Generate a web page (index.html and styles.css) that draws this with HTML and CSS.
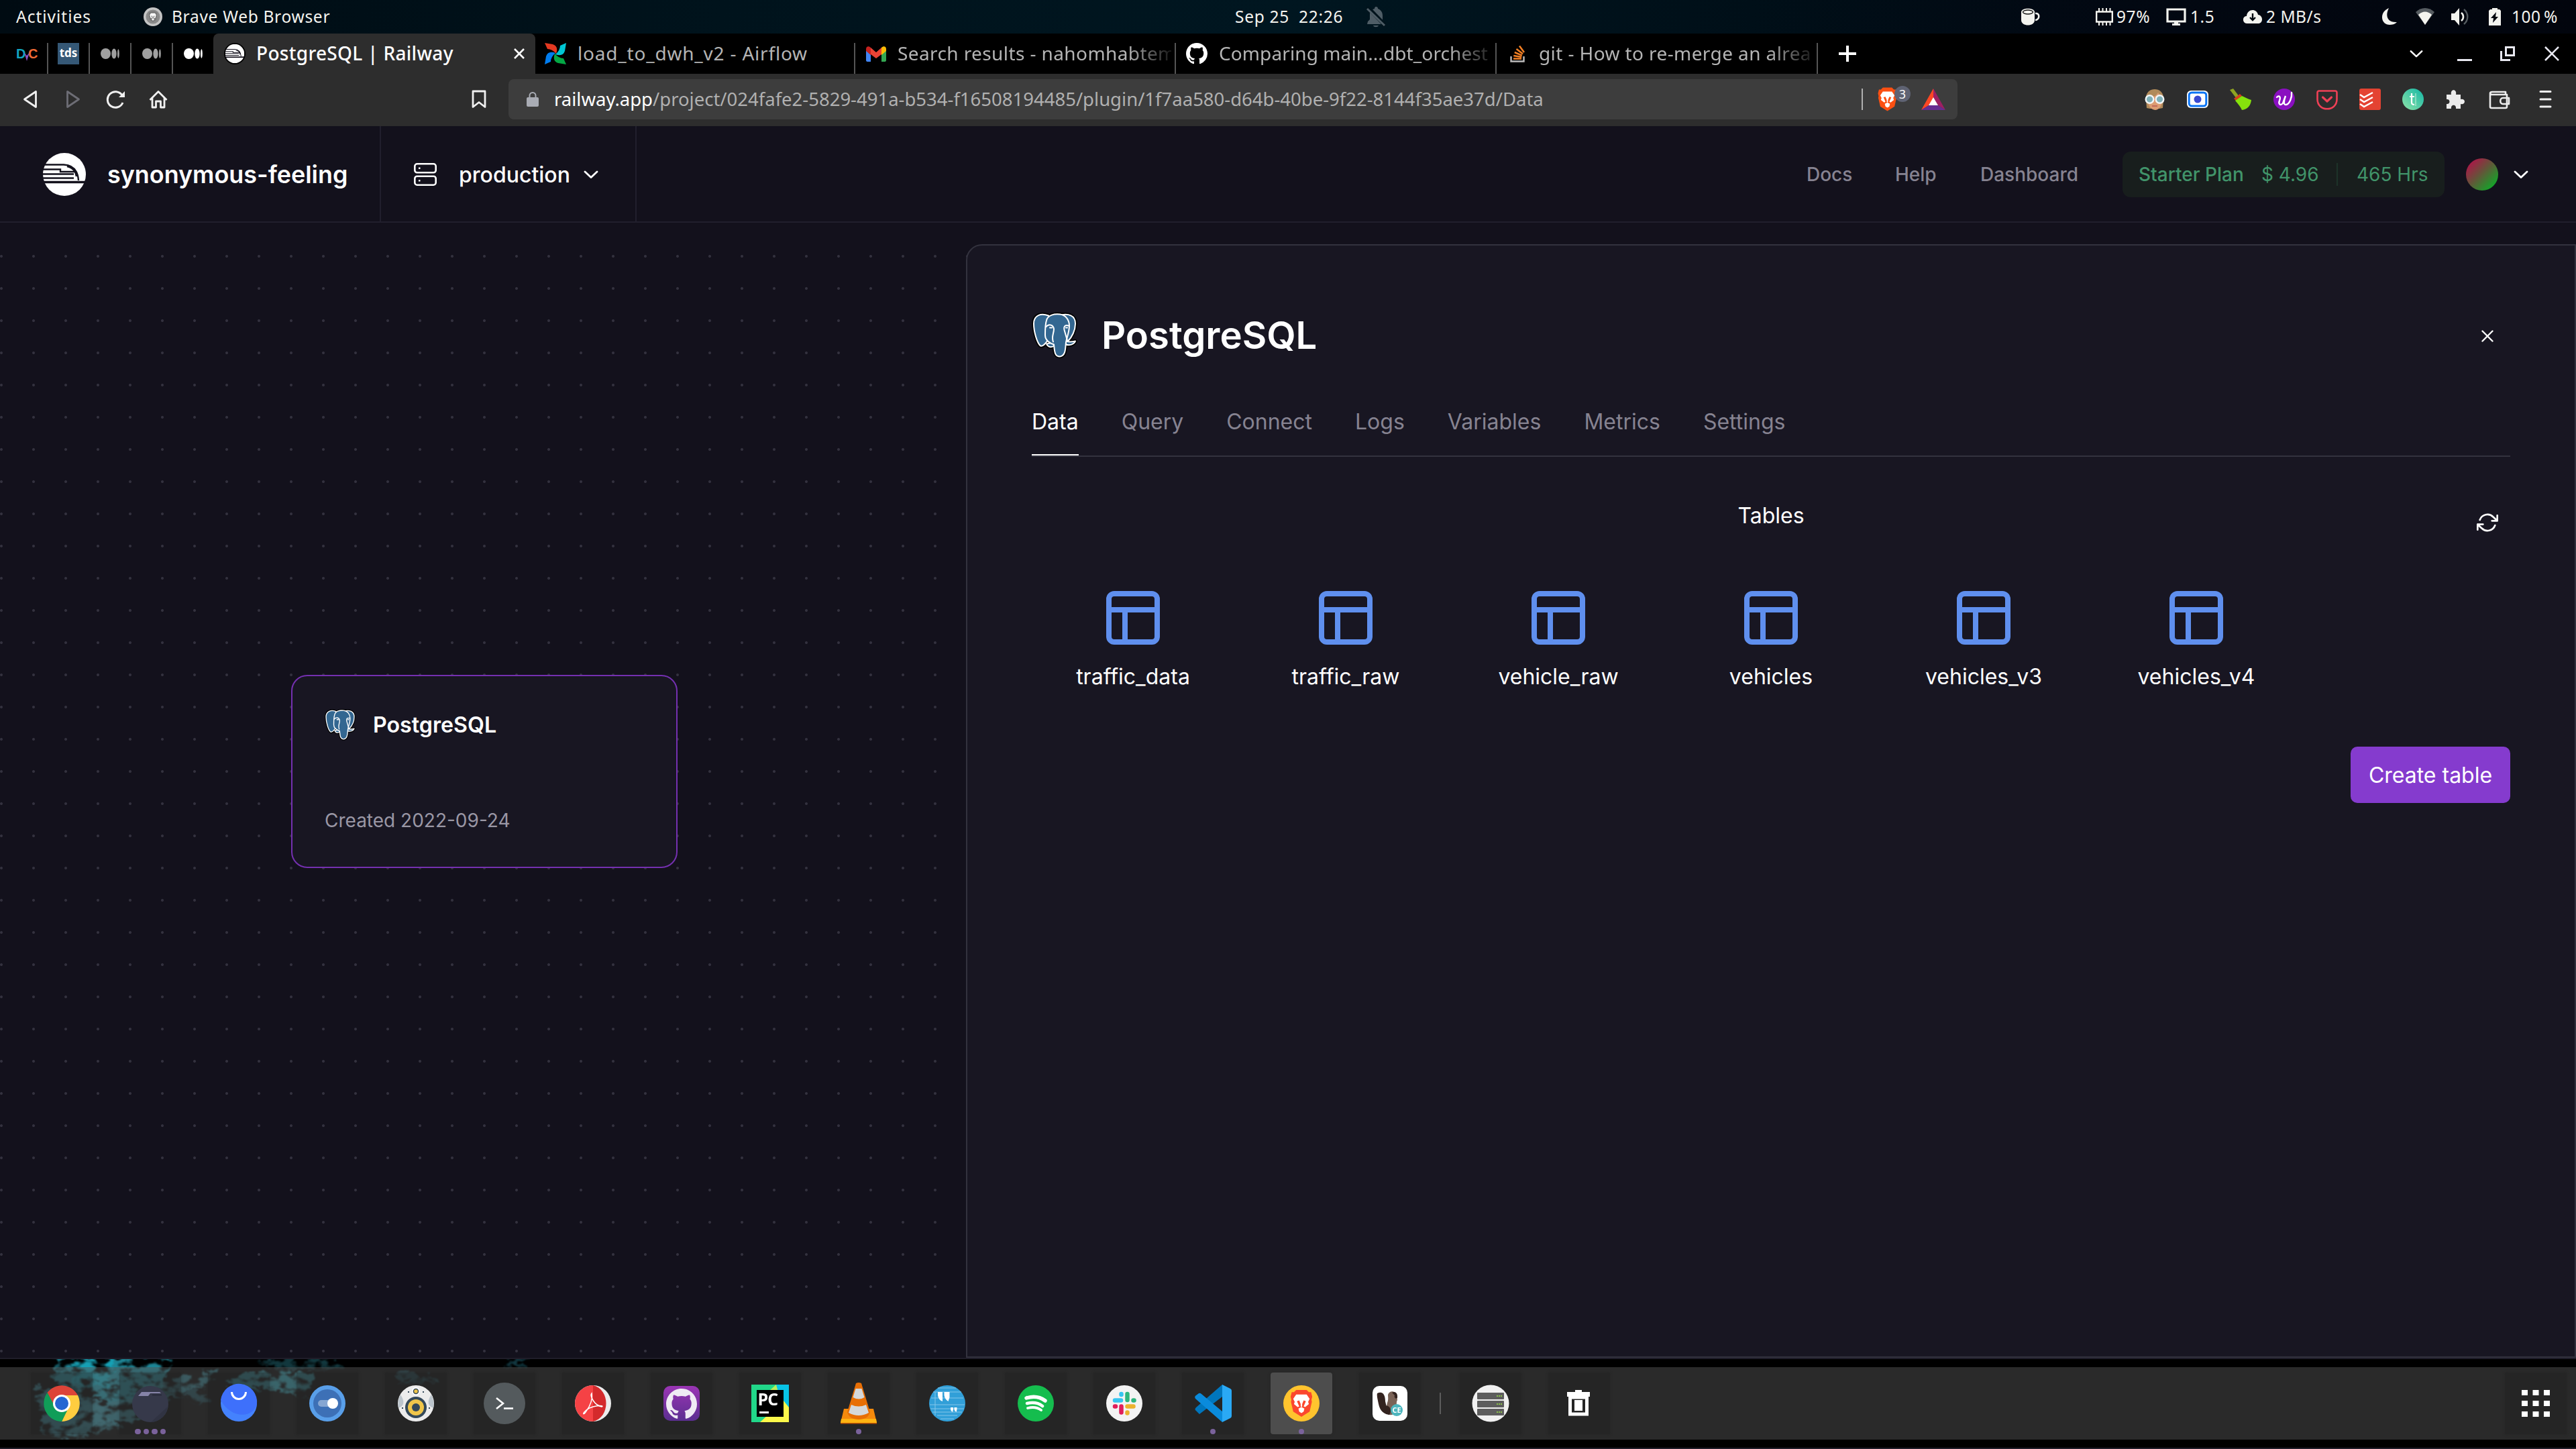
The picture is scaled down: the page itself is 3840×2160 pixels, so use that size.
FILE: index.html
```html
<!DOCTYPE html>
<html lang="en">
<head>
<meta charset="utf-8">
<title>PostgreSQL | Railway</title>
<link rel="stylesheet" href="styles.css">
</head>
<body>
<svg class="sprite" width="0" height="0" aria-hidden="true">
  <symbol id="elephant" viewBox="0 0 68 69">
    <g fill="#000" stroke="#000" stroke-width="5.5" stroke-linejoin="round">
      <path d="M25 5C14 1 3 4 3 17c0 12 5 29 10 33 4 2 8-3 10-7zM44 4c10-2 21 0 21 13 0 10-5 20-11 26l-6-2z"/>
      <path d="M22 12C24 4 34 2 42 3c9 1 14 9 14 17 0 10-4 18-5 25-1 8 0 20-9 21-8 0-8-8-9-18-6-2-13-6-13-14s0-16 2-22z"/>
      <path d="M22 47c5 0 8-2 11-3v6c-4 3-9 2-11-3zM51 43c5 2 10 1 14 0-2 5-9 7-14 5z"/>
    </g>
    <g fill="#336791" stroke="#fff" stroke-width="2" stroke-linejoin="round" stroke-linecap="round">
      <path d="M44 4c10-2 21 0 21 13 0 10-5 20-11 26l-6-2z"/>
      <path d="M25 5C14 1 3 4 3 17c0 12 5 29 10 33 4 2 8-5 11-8z"/>
      <path d="M22 47c5 0 8-2 11-3v6c-4 3-9 2-11-3zM51 43c5 2 10 1 14 0-2 5-9 7-14 5z"/>
      <path d="M22 12C24 4 34 2 42 3c9 1 14 9 14 17 0 10-4 18-5 25-1 8 0 20-9 21-8 0-8-8-9-18-6-2-13-6-13-14s0-16 2-22z"/>
      <path fill="none" d="M21 22c4-5 11-4 12 3 0 7-4 11-1 19M55 20c-6-2-8 2-6 8l4 14M27 23h3M51 23h2"/>
    </g>
  </symbol>
  <symbol id="railway" viewBox="0 0 64 64">
    <circle cx="32" cy="32" r="32" fill="#fff"/>
    <g fill="none" stroke="#13111c" stroke-width="2.4">
      <path d="M2 17.5H31C45 18 52 27 53 41"/>
      <path d="M0 24.500H26V28H50M0 31.500H46M0 37.500H46"/>
      <path d="M36 20C45 22 49 28 50 35"/>
      <path stroke-width="3.600" d="M0 43.500H64"/>
    </g>
  </symbol>
  <symbol id="octocat" viewBox="0 0 16 16"><path fill="currentColor" d="M8 0C3.580 0 0 3.580 0 8c0 3.540 2.290 6.530 5.470 7.590.4.07.55-.17.55-.38 0-.19-.01-.82-.01-1.490-2.010.37-2.530-.49-2.690-.94-.09-.23-.48-.94-.82-1.130-.28-.15-.68-.52-.01-.53.63-.01 1.080.58 1.230.82.72 1.210 1.870.87 2.330.66.07-.52.28-.87.51-1.070-1.780-.2-3.640-.89-3.640-3.950 0-.87.31-1.590.82-2.150-.08-.2-.36-1.020.08-2.120 0 0 .67-.21 2.200.82.64-.18 1.320-.27 2-.27.68 0 1.360.09 2 .27 1.530-1.040 2.200-.82 2.200-.82.44 1.100.16 1.920.08 2.120.51.56.82 1.270.82 2.150 0 3.070-1.870 3.750-3.650 3.950.29.25.54.73.54 1.480 0 1.070-.01 1.930-.01 2.200 0 .21.15.46.55.38A8.013 8.013 0 0016 8c0-4.420-3.580-8-8-8z"/></symbol>
  <symbol id="medium" viewBox="0 0 28 16"><ellipse cx="7.500" cy="8" rx="7.500" ry="8" fill="currentColor"/><ellipse cx="20" cy="8" rx="3.700" ry="7.500" fill="currentColor"/><ellipse cx="26.400" cy="8" rx="1.400" ry="6.800" fill="currentColor"/></symbol>
  <symbol id="lion" viewBox="0 0 30 36">
    <path fill="currentColor" d="M8 0h14l3 3h3l1.500 6-1 4 .5 3-3 13-11 7-11-7-3-13 .5-3-1-4L2 3h3z"/>
    <path fill="#fff" d="M8 6h14l4 6-2 4 1 3-5 4-2-1 3-7-3-1-2 5v3l-1 1-1-1v-3l-2-5-3 1 3 7-2 1-5-4 1-3-2-4zM15 23l4 2-1 4-3 2-3-2-1-4z"/>
  </symbol>
  <symbol id="chev" viewBox="0 0 22 12"><path d="M2 2l9 8.500L20 2" fill="none" stroke="currentColor" stroke-width="2.800" stroke-linecap="round" stroke-linejoin="round"/></symbol>
  <symbol id="table" viewBox="0 0 80 80"><g fill="none" stroke="#5f8fee" stroke-width="8"><rect x="4" y="4" width="72" height="72" rx="8"/><path d="M4 28h72M28 28v48"/></g></symbol>
</svg>

<div class="desktop">
  <div class="topbar">
    <span class="t-act">Activities</span>
    <svg width="28" height="28" viewBox="0 0 28 28"><circle cx="14" cy="14" r="14" fill="#c4c4c4"/><circle cx="14" cy="14" r="10.500" fill="#8a8a8a"/><g color="#777"><use href="#lion" x="7.500" y="5.500" width="13" height="17"/></g></svg>
    <span class="t-app">Brave Web Browser</span>
    <span class="t-date">Sep 25&nbsp; 22:26</span>
    <svg width="30" height="32" viewBox="0 0 30 32"><path fill="#4f5d66" d="M15 1c2 0 3 1 3 3 5 2 7 6 7 10v7l3 4v2H2l1-4 3-3v-8c0-4 3-7 7-8 0-2 1-3 2-3zM11 29h8c-1 3-7 3-8 0z"/><path d="M1 0l28 29" stroke="#00131c" stroke-width="6"/><path d="M2 4l26 25" stroke="#4f5d66" stroke-width="3"/></svg>
    <svg width="30" height="26" viewBox="0 0 30 26"><path fill="#f4f4ef" d="M1 6c0-7 20-7 20 0v12c0 10-20 10-20 0z"/><ellipse cx="11" cy="6" rx="7.500" ry="3" fill="none" stroke="#111" stroke-width="1.400"/><path d="M22 8c7-1 7 9 0 10" fill="none" stroke="#f4f4ef" stroke-width="2.600"/></svg>
    <svg width="26" height="26" viewBox="0 0 26 26"><path d="M1.200 5.500h23.600v15H1.200z" fill="none" stroke="#f4f4ef" stroke-width="2.400"/><path d="M5 0v5M10.500 0v5M16 0v5M21.500 0v5M5 21v5M10.500 21v5M16 21v5M21.500 21v5" stroke="#f4f4ef" stroke-width="2"/></svg>
    <span class="t-stat">97%</span>
    <svg width="30" height="26" viewBox="0 0 30 26"><path d="M2 2h26v18H2z" fill="none" stroke="#f4f4ef" stroke-width="3.200"/><path fill="#f4f4ef" d="M12 20h6v3h3v3H9v-3h3z"/></svg>
    <span class="t-stat">1.5</span>
    <svg width="28" height="20" viewBox="0 0 28 20"><path fill="#f4f4ef" d="M6 20c-8 0-8-11-1-11C6-2 20-3 22 7c8 1 8 13 0 13z"/><path d="M14 5v9M10 11l4 4 4-4" fill="none" stroke="#02080f" stroke-width="2.400"/></svg>
    <span class="t-net">2 MB/s</span>
    <svg width="22" height="26" viewBox="0 0 22 26"><path fill="#f4f4ef" d="M10 0C-4 6-3 24 11 25c4 0 8-1 11-4C8 22 4 12 10 0z"/></svg>
    <svg width="28" height="26" viewBox="0 0 28 26"><path fill="#555b60" d="M0 6c8-8 20-8 28 0L14 25z"/><path fill="#f4f4ef" d="M4 10c6-6 14-6 20 0L14 25z"/></svg>
    <svg width="26" height="26" viewBox="0 0 26 26"><path fill="#f4f4ef" d="M0 8h5l7-8v26l-7-8H0z"/><path d="M15 7c4 3 4 9 0 12" fill="none" stroke="#f4f4ef" stroke-width="2.600"/><path d="M19 2c7 6 7 16 0 22" fill="none" stroke="#555b60" stroke-width="2.400"/></svg>
    <svg width="18" height="26" viewBox="0 0 18 26"><path fill="#f4f4ef" d="M5 0h8v2h3l2 2v22H0V4l2-2h3z"/><path fill="#02060e" d="M11 6l-8 9h4l-1 7 8-9h-4z"/></svg>
    <span class="t-bat">100&#8201;%</span>
  </div>

  <div class="tabstrip">
    <div class="pin"><svg width="32" height="32" viewBox="0 0 32 32"><g class="dvc"><text x="0" y="23" fill="#12a5bf">D</text><text x="18" y="23" fill="#ef6b36">C</text></g><path fill="#8a4fc4" d="M12 14l4 13 4-13-4 5z"/></svg></div>
    <div class="pin"><svg width="32" height="32" viewBox="0 0 32 32"><path fill="#355876" d="M0 0h32v32H0z"/><text class="tds" x="16" y="21" text-anchor="middle" fill="#fff">tds</text></svg></div>
    <div class="pin dim"><svg width="28" height="16"><use href="#medium"/></svg></div>
    <div class="pin dim"><svg width="28" height="16"><use href="#medium"/></svg></div>
    <div class="pin last"><svg width="28" height="16"><use href="#medium"/></svg></div>
    <div class="tab active"><svg width="32" height="32" viewBox="-4 -4 72 72"><circle cx="32" cy="32" r="36"/><use href="#railway" width="64" height="64"/></svg><span class="label">PostgreSQL | Railway</span><svg class="x" width="16" height="16" viewBox="0 0 16 16"><path d="M1 1l14 14M15 1L1 15" stroke="#fff" stroke-width="2.600"/></svg></div>
    <div class="tab air"><svg width="32" height="32" viewBox="0 0 32 32"><path fill="#e43921" d="M0 0l12 2q9 3 5 14-6-7-13-7z"/><path fill="#00c7d4" d="M32 0l-2 12q-3 9-14 5 7-6 7-13z"/><path fill="#04a845" d="M32 32l-12-2q-9-3-5-14 6 7 13 7z"/><path fill="#017cee" d="M0 32l2-12q3-9 14-5-7 6-7 13z"/></svg><span class="label">load_to_dwh_v2 - Airflow</span></div>
    <div class="tab gm"><svg width="30" height="23" viewBox="0 0 30 23"><path fill="#4285f4" d="M0 6l7 5v12H2c-1 0-2-1-2-2z"/><path fill="#34a853" d="M30 6l-7 5v12h5c1 0 2-1 2-2z"/><path fill="#fbbc04" d="M23 2c3-3 7-2 7 2v3l-7 6z"/><path fill="#c5221f" d="M7 2C4-1 0 0 0 4v3l7 6z"/><path fill="#ea4335" d="M7 2l8 7 8-7v10l-8 6-8-6z"/></svg><span class="label fade">Search results - nahomhabtem</span></div>
    <div class="tab gh"><svg width="32" height="32"><use href="#octocat"/></svg><span class="label fade">Comparing main...dbt_orchest</span></div>
    <div class="tab so"><svg width="24" height="26" viewBox="0 0 24 26"><path d="M1.500 17v7.500h19V17" fill="none" stroke="#bcbbbb" stroke-width="2.400"/><path d="M5 20.500h12M5.300 16l12 2M6.800 11l11 4.600M9.500 6l9.500 7.300M14 1.500l7 9.500" stroke="#f48024" stroke-width="2.500"/></svg><span class="label fade">git - How to re-merge an alrea</span></div>
    <svg class="plus" width="26" height="24" viewBox="0 0 26 24"><path d="M13 0v24M0 12h26" stroke="#fff" stroke-width="4"/></svg>
    <div class="winctl">
      <svg width="20" height="12"><use href="#chev"/></svg>
      <svg width="22" height="24" viewBox="0 0 22 24"><path d="M0 21.500h22" stroke="#e8e8f0" stroke-width="3"/></svg>
      <svg width="22" height="22" viewBox="0 0 22 22"><path d="M8.500 1.500h12v12h-12zM1.500 7v13.500H15" fill="none" stroke="#e8e8f0" stroke-width="3"/></svg>
      <svg width="22" height="22" viewBox="0 0 22 22"><path d="M1 1l20 20M21 1L1 21" stroke="#e8e8f0" stroke-width="2.600"/></svg>
    </div>
  </div>

  <div class="toolbar">
    <div class="nav">
      <svg width="22" height="28" viewBox="0 0 22 28"><path d="M19.500 2.500v23L2.500 14z" fill="none" stroke="#f0f0f0" stroke-width="2.800" stroke-linejoin="round"/></svg>
      <svg width="22" height="28" viewBox="0 0 22 28"><path d="M2.500 2.500v23l17-11.500z" fill="none" stroke="#6d6d75" stroke-width="2.800" stroke-linejoin="round"/></svg>
      <svg width="28" height="28" viewBox="0 0 28 28"><path d="M25 19a11.800 11.800 0 1 1-1-11" fill="none" stroke="#f0f0f0" stroke-width="3"/><path fill="#f0f0f0" d="M28 2v9h-9z"/></svg>
      <svg width="28" height="28" viewBox="0 0 28 28"><path d="M1.500 15L14 2.500 26.500 15M5 12v14h5.500v-9h7v9H23V12" fill="none" stroke="#f0f0f0" stroke-width="2.800" stroke-linejoin="round"/></svg>
    </div>
    <svg class="bookmark" width="22" height="28" viewBox="0 0 22 28"><path d="M2 2h18v23.500l-9-7-9 7z" fill="none" stroke="#f0f0f0" stroke-width="2.800" stroke-linejoin="round"/></svg>
    <div class="url">
      <svg width="18" height="22" viewBox="0 0 18 22"><rect y="8" width="18" height="14" rx="2" fill="#a9acb4"/><path d="M4.500 9V5.500a4.500 4.500 0 0 1 9 0V9" fill="none" stroke="#a9acb4" stroke-width="2"/></svg>
      <span class="addr"><b>railway.app</b><span class="path">/project/024fafe2-5829-491a-b534-f16508194485/plugin/1f7aa580-d64b-40be-9f22-8144f35ae37d/Data</span></span>
      <i class="vsep"></i>
      <span class="shield"><svg width="29" height="36" color="#fb5012"><use href="#lion"/></svg><em>3</em></span>
      <svg class="bat" width="36" height="32" viewBox="0 0 36 32"><path fill="#ff4724" d="M18 0v14l-7 11L0 32z"/><path fill="#9e1f63" d="M18 0v14l7 11 11 7z"/><path fill="#662d91" d="M11 25h14l11 7H0z"/><path fill="#fff" d="M18 13l7 12H11z"/></svg>
    </div>
    <div class="exts">
      <svg viewBox="0 0 32 32"><path fill="#b08a5a" d="M3 16C1-4 31-4 29 16l-1 13-5 1H9l-5-1z"/><path fill="#dc9c72" d="M5 15c8-1 13-4 16-9l6 9c1 22-21 23-22 0z"/><path d="M12 26h8" stroke="#c46a5a" stroke-width="2"/><g fill="#7fb0b8" stroke="#f2f6f7" stroke-width="2.400"><circle cx="8.500" cy="16" r="5.800"/><circle cx="23.500" cy="16" r="5.800"/></g></svg>
      <svg viewBox="0 0 32 32"><rect y="3" width="32" height="26" rx="6" fill="#fff"/><rect x="3.200" y="6" width="25.600" height="20" rx="4" fill="#fff" stroke="#0a74f5" stroke-width="3"/><circle cx="16" cy="16" r="5.500" fill="#3949d0"/></svg>
      <svg viewBox="0 0 32 32"><path fill="#8fa322" d="M0 2l5-2 9 12-4 3z"/><path fill="#d43f1d" d="M6 15l9-7 3 3-9 7z"/><path fill="#86e20c" d="M8 18l10-7c5 2 10 5 14 6-1 9-6 14-14 15-2-5-6-9-10-14z"/></svg>
      <svg viewBox="0 0 32 32"><circle cx="16" cy="16" r="16" fill="#8a0fc0"/><path d="M5 13c4-4 6 0 4 5s1 8 5 4l4-11c-3 8-3 14 1 13 5-1 9-11 8-18" fill="none" stroke="#fff" stroke-width="2.400" stroke-linecap="round"/></svg>
      <svg viewBox="0 0 32 32"><path d="M4 3.500h24c1.500 0 2.500 1 2.500 2.500v10c0 19-29 19-29 0V6c0-1.500 1-2.500 2.500-2.500z" fill="none" stroke="#ef4056" stroke-width="2.600"/><path d="M9.500 13l6.500 6 6.500-6" fill="none" stroke="#ef4056" stroke-width="3.200" stroke-linecap="round" stroke-linejoin="round"/></svg>
      <svg viewBox="0 0 32 32"><rect width="32" height="32" rx="3" fill="#e44332"/><path d="M1 9l6 4L20 6M1 16l6 4 13-7M1 23l6 4 13-7" fill="none" stroke="#fff" stroke-width="2.400"/></svg>
      <svg viewBox="0 0 32 32"><defs><linearGradient id="tg" x1="1" y1="0" x2="0" y2="1"><stop offset="0" stop-color="#12b6a5"/><stop offset="1" stop-color="#8fe3a8"/></linearGradient></defs><circle cx="16" cy="16" r="16" fill="url(#tg)"/><path d="M14 7v14q0 3 4 3M11 12h7" fill="none" stroke="#fff" stroke-width="2.200"/><path d="M20 7v19" stroke="#c9f2dc" stroke-width="1"/></svg>
      <svg viewBox="0 0 32 32"><path fill="#ececec" d="M2 9h7c-2-9 9-9 7 0h7v7c8-2 8 9 0 7v7h-7c1-7-8-7-7 0H2v-7c6 1 6-8 0-7z"/></svg>
      <svg viewBox="0 0 32 32"><path d="M25 9V5H5C1 5 1 9 5 9h22v18q0 2-2 2H4q-2 0-2-2V7M30 14H21c-5 0-5 9 0 9h9z" fill="none" stroke="#ececec" stroke-width="2.600" stroke-linejoin="round"/></svg>
      <svg viewBox="0 0 32 32"><path d="M13 4.500h15M13 16h15M13 27h15" stroke="#f0f0f0" stroke-width="3" stroke-linecap="round"/></svg>
    </div>
  </div>

  <header class="apphead">
    <div class="brand"><svg width="64" height="64"><use href="#railway"/></svg><span>synonymous-feeling</span></div>
    <div class="env">
      <svg width="34" height="34" viewBox="0 0 34 34"><g fill="none" stroke="#fff" stroke-width="2.600"><rect x="1.300" y="1.300" width="31.400" height="13" rx="3.500"/><rect x="1.300" y="19.700" width="31.400" height="13" rx="3.500"/></g><path d="M7 7.800h2.500M7 26.200h2.500" stroke="#fff" stroke-width="2.600"/></svg>
      <span>production</span>
      <svg width="22" height="12"><use href="#chev"/></svg>
    </div>
    <nav class="links"><a>Docs</a><a>Help</a><a>Dashboard</a></nav>
    <div class="plan"><span class="p1">Starter Plan</span><span class="p2">$ 4.96</span><span class="p3">465 Hrs</span></div>
    <div class="avatar"></div>
    <svg class="achev" width="22" height="12"><use href="#chev"/></svg>
  </header>

  <main class="canvas">
    <section class="node">
      <div class="node-head"><svg width="46" height="47"><use href="#elephant"/></svg><span>PostgreSQL</span></div>
      <div class="node-foot">Created 2022-09-24</div>
    </section>
    <section class="panel">
      <div class="title"><svg width="68" height="70"><use href="#elephant"/></svg><h1>PostgreSQL</h1><svg class="close" width="18" height="18" viewBox="0 0 18 18"><path d="M1.500 1.500l15 15M16.500 1.500l-15 15" stroke="#fff" stroke-width="2.400" stroke-linecap="round"/></svg></div>
      <nav class="tabs"><a class="on">Data</a><a>Query</a><a>Connect</a><a>Logs</a><a>Variables</a><a>Metrics</a><a>Settings</a></nav>
      <div class="subhead"><h2>Tables</h2><svg width="32" height="32" viewBox="0 0 24 24"><path d="M23 4v6h-6M1 20v-6h6M3.510 9a9 9 0 0 1 14.850-3.360L23 10M1 14l4.640 4.360A9 9 0 0 0 20.490 15" fill="none" stroke="#fff" stroke-width="2" stroke-linecap="round" stroke-linejoin="round"/></svg></div>
      <div class="tables">
        <div><svg width="80" height="80"><use href="#table"/></svg><span>traffic_data</span></div>
        <div><svg width="80" height="80"><use href="#table"/></svg><span>traffic_raw</span></div>
        <div><svg width="80" height="80"><use href="#table"/></svg><span>vehicle_raw</span></div>
        <div><svg width="80" height="80"><use href="#table"/></svg><span>vehicles</span></div>
        <div><svg width="80" height="80"><use href="#table"/></svg><span>vehicles_v3</span></div>
        <div><svg width="80" height="80"><use href="#table"/></svg><span>vehicles_v4</span></div>
      </div>
      <button class="create">Create table</button>
    </section>
  </main>

  <footer class="dockwrap">
    <svg class="wall" width="900" height="120" viewBox="0 0 900 120">
      <defs>
        <filter id="rough" x="-10%" y="-30%" width="120%" height="160%">
          <feTurbulence type="fractalNoise" baseFrequency="0.05 0.09" numOctaves="4" seed="8" result="n"/>
          <feDisplacementMap in="SourceGraphic" in2="n" scale="34" xChannelSelector="R" yChannelSelector="G" result="d"/>
          <feColorMatrix in="n" type="matrix" values="0 0 0 0 0  0 0 0 0 0  0 0 0 0 0  0 5 0 0 -1.700" result="m"/>
          <feComposite in="d" in2="m" operator="in"/>
          <feGaussianBlur stdDeviation="1.200"/>
        </filter>
      </defs>
      <g filter="url(#rough)">
        <path fill="#1b8494" d="M80 0h175l-20 55-60 20-40-20-50-5z"/>
        <path fill="#16a0b4" d="M110 0h60l-10 45-50-5z"/>
        <path fill="#2f8192" opacity=".9" d="M55 40l80 15 30 40-70 24-30-10z"/>
        <path fill="#2f7d8c" opacity=".9" d="M105 80l100-20 10 30-125 34z"/>
        <path fill="#2b7f8e" opacity=".75" d="M190 45l130-25-10 20-70 24z"/>
        <path fill="#278896" opacity=".85" d="M335 30l60-15 70 10-10 32-60-10-50 5z"/>
        <path fill="#1d6d7a" opacity=".5" d="M380 0h120l10 14-90 5z"/>
        <path fill="#236b7b" opacity=".5" d="M590 20h50l10 16h-60zM750 0h40l-6 12h-30zM280 50h34l-5 20-22-5z"/>
      </g>
    </svg>
    <div class="dock">
      <div class="tile"><svg viewBox="0 0 54 54"><path fill="#dd4438" d="M5.500 11A27 27 0 0 1 51 15H27L15 30z"/><path fill="#ffcd40" d="M51 15A27 27 0 0 1 27 54l12-27-8-12z"/><path fill="#109d58" d="M5.500 11A27 27 0 0 0 27 54l8-16-18-6z"/><circle cx="27" cy="27" r="13" fill="#fff"/><circle cx="27" cy="27" r="10" fill="#2565d2"/></svg></div>
      <div class="tile"><svg viewBox="0 0 54 54"><circle cx="27" cy="28" r="27" fill="#36394a"/><path fill="#8684a8" d="M14 10h27l2 2H27l-3 4H9z"/><path d="M30 14.500h14" stroke="#262938" stroke-width="1.500"/><path fill="#303342" d="M53 32A27 27 0 0 1 28 55z"/></svg><span class="dots"><i></i><i></i><i></i><i></i></span></div>
      <div class="tile"><svg viewBox="0 0 54 54"><circle cx="27" cy="27" r="27" fill="#4482fd"/><path fill="#3e70fb" d="M0 22A27 27 0 0 1 54 28C50 48 16 52 0 22z"/><path d="M16.500 10a10.500 10.500 0 0 0 21 0" fill="none" stroke="#fff" stroke-width="3"/></svg></div>
      <div class="tile"><svg viewBox="0 0 54 54"><circle cx="27" cy="27" r="27" fill="#599fe9"/><circle cx="27" cy="27" r="21" fill="#3d70b6"/><rect x="13" y="22" width="25" height="10" rx="5" fill="#86a6d2"/><circle cx="35" cy="27" r="8" fill="#fff"/></svg></div>
      <div class="tile"><svg viewBox="0 0 54 54"><circle cx="27" cy="27" r="27" fill="#ececec"/><path fill="#bcc5cc" d="M4 14q10 15-3 20-2-10 3-20zM50 14q-10 15 3 20 2-10-3-20z"/><circle cx="27" cy="33" r="16" fill="#34495a"/><circle cx="27" cy="33" r="12" fill="#f0c64a"/><circle cx="27" cy="33" r="6" fill="#34495a"/><circle cx="27" cy="9" r="6" fill="#fff"/><circle cx="27" cy="9" r="3.500" fill="#f0c64a" stroke="#34495a" stroke-width="1.500"/><path d="M15 10h2M37 10h2M6 34h2M46 34h2" stroke="#34495a" stroke-width="2"/></svg></div>
      <div class="tile"><svg class="big" viewBox="0 0 62 62"><circle cx="31" cy="31" r="31" fill="#545a5d"/><path d="M19 23l10 8-10 8" fill="none" stroke="#fff" stroke-width="2.600"/><path d="M30 38.500h14" stroke="#fff" stroke-width="2.600"/></svg></div>
      <div class="tile"><svg viewBox="0 0 54 54"><circle cx="27" cy="27" r="27" fill="#ececec"/><path fill="#f54245" d="M27 0a27 27 0 0 0 0 54z"/><path fill="#d42a2c" d="M27 0c26 6 26 48 0 54z"/><path d="M25 12c-3 4 4 18 15 20 6-2-16-4-26 8-3 4 0 3 2 0 6-8 11-18 9-28z" fill="none" stroke="#fff" stroke-width="1.500"/></svg></div>
      <div class="tile"><svg viewBox="0 0 54 54"><defs><linearGradient id="pg" x2="0" y2="1"><stop stop-color="#9a35b4"/><stop offset="1" stop-color="#5b2e91"/></linearGradient></defs><rect y="1" width="54" height="52" rx="10" fill="url(#pg)"/><g color="#efeaf4"><use href="#octocat" x="4" y="5" width="46" height="46"/></g></svg></div>
      <div class="tile"><svg viewBox="0 0 54 54"><path fill="#21d789" d="M-1-1h56v56H-1z"/><path fill="#07c3e6" d="M36-1h19v34L40 15z"/><path fill="#fcf84a" d="M12 55l35-32 8 10v22z"/><path fill="#b9ee5c" d="M26 8l10-9 5 18z"/><path d="M7 7h40v40H7z"/><text class="pc" x="8.500" y="30" fill="#fff">PC</text><path fill="#fff" d="M11 39h14v3H11z"/></svg></div>
      <div class="tile"><svg class="big" viewBox="0 0 62 62"><path fill="#f58a0c" d="M9 39h44l5 21H4z"/><path fill="#ffb412" d="M5 54h52l1 6H4z"/><path fill="#e86f05" d="M14 44l13-43q4-2 8 0l13 43q-3 11-17 11t-17-11z"/><path fill="#d5d8da" d="M26.500 9h9l4 13q-8 5-17 0zM20 33q11 5 22 0l4 12q-15 8-30 0z"/><path fill="#c05402" d="M4 60h54v1.500H4z"/></svg><span class="dots"><i></i></span></div>
      <div class="tile"><svg viewBox="0 0 54 54"><circle cx="27" cy="27" r="27" fill="#319fd8"/><path d="M13 4h27M6 10h42M3 19h48M1 29h52M2 35h50M5 40h44M12 45h30M17 50h20M9 10v35" stroke="#84c6ea" stroke-width="1"/><path fill="#fff" d="M13 10h7v14q-6-2-7-9zM22.500 10h8v8l-2 6q-5-3-6-9zM32 33h4v3l-1 4q-3-2-3-4zM37.500 33h4v3l-1 4q-3-2-3-4z"/></svg></div>
      <div class="tile"><svg viewBox="0 0 54 54"><circle cx="27" cy="27" r="27" fill="#15bd4e"/><g fill="none" stroke="#fff" stroke-linecap="round"><path stroke-width="5.500" d="M13 19q16-5 28 4"/><path stroke-width="4.500" d="M14 27q14-3 23 4"/><path stroke-width="3.800" d="M15 34q12-3 20 3"/></g></svg></div>
      <div class="tile"><svg viewBox="0 0 54 54"><circle cx="27" cy="27" r="27" fill="#f3f3f3"/><g stroke-width="6.500" stroke-linecap="round"><path stroke="#36c5f0" d="M13 22.500h9M22.500 13v1"/><path stroke="#2eb67d" d="M31.500 13v9M40.500 22.500h1"/><path stroke="#ecb22e" d="M31.500 31.500h9M31.500 40.500v1"/><path stroke="#e01e5a" d="M22.500 31.500v9M13 31.500h1"/></g></svg></div>
      <div class="tile"><svg viewBox="0 0 54 54"><path fill="#0076bd" d="M41-1v18L7 43l-5-5q-3-2 0-5z"/><path fill="#0a8bdc" d="M2 15l4-3q2-1 4 1l31 26v16L1 20q-2-3 1-5z"/><path fill="#2aa9f5" d="M41-1l12 6q2 1 2 3v38q0 2-2 3l-12 6z"/></svg><span class="dots"><i></i></span></div>
      <div class="tile cur"><svg viewBox="0 0 54 54"><circle cx="27" cy="27" r="27" fill="#ffc42e"/><g color="#fb472e"><use href="#lion" x="9" y="7" width="36" height="40"/></g></svg><span class="dots"><i></i></span></div>
      <div class="tile"><svg viewBox="0 0 54 54"><rect x="1" y="1" width="52" height="52" rx="10" fill="#fff"/><path fill="#33231f" d="M8 12c8-4 12 2 12 12 1 6 4 14 8 20-10 0-16-6-18-16-1-6-3-12-2-16z"/><path fill="#7a6256" d="M24 14c2-7 12-6 13 1l1 7c-2 3-1 9 0 13-1 6-6 10-12 9 2-6-6-10-3-18 2-5 1-8 1-12z"/><path fill="#33231f" d="M30 11c5-3 9 1 8 8-3 2-5-1-4-4zM22 30c6 2 8 8 4 14-6-2-8-8-4-14z"/><circle cx="37" cy="37" r="9" fill="#4db5bd"/><text class="ce" x="37" y="41" text-anchor="middle" fill="#fff">CE</text></svg></div>
      <i class="dsep"></i>
      <div class="tile"><svg viewBox="0 0 54 54"><circle cx="27" cy="27" r="27.500" fill="#f1f1f1"/><g fill="#5d5d5d"><rect x="7" y="11" width="40" height="10" rx="1"/><rect x="7" y="23" width="40" height="10" rx="1"/><rect x="7" y="35" width="40" height="10" rx="1"/></g><path d="M36 16h8M36 28h8M36 40h8" stroke="#8bc34a" stroke-width="2" stroke-dasharray="2 1"/></svg></div>
      <div class="tile"><svg viewBox="1 0 54 54"><path fill="#fff" d="M22 7h10v3h12v7H10v-7h12z"/><path d="M14.500 18h25v25h-25z" fill="none" stroke="#fff" stroke-width="5"/><path fill="#fff" d="M21 22h12v16H21z"/></svg></div>
      <div class="tile apps"><svg viewBox="0 0 54 54"><g fill="#fff"><path d="M6 7h9v8H6zM22.500 7h9v8h-9zM39 7h9v8h-9zM6 23h9v8H6zM22.500 23h9v8h-9zM39 23h9v8h-9zM6 39h9v8H6zM22.500 39h9v8h-9zM39 39h9v8h-9z"/></g></svg></div>
    </div>
  </footer>
</div>
</body>
</html>
```
FILE: styles.css
```css
* { box-sizing: border-box; }
body { margin: 0; background: #000; }
.sprite { display: block; position: absolute; }
svg { display: block; flex: none; }
.desktop {
  width: 3840px; height: 2160px; overflow: hidden;
  display: flex; flex-direction: column;
  font-family: "Noto Sans", sans-serif; color: #fff;
}
.desktop span { white-space: nowrap; }

/* system bar */
.topbar {
  height: 50px; flex: none; display: grid; align-items: center;
  grid-template-columns: 190px 42px 1585px 195px 976px 112px 31px 74px 36px 79px 34px 173px 50px 53px 56px 34px 96px;
  padding-left: 24px;
  background: linear-gradient(90deg, #000b12 0, #00131c 28%, #001620 50%, #000f18 68%, #020812 82%, #02050d 100%);
  font-size: 24.500px; letter-spacing: .7px; color: #f4f4ef;
}
.topbar span { margin-top: -2px; }
.topbar .t-act { letter-spacing: 1px; }
.topbar .t-stat { letter-spacing: .6px; }
.topbar .t-net, .topbar .t-bat { letter-spacing: .5px; }

/* browser tabs */
.tabstrip { height: 60px; flex: none; display: flex; align-items: flex-start; background: #000; font-size: 28px; letter-spacing: .8px; }
.pin { width: 62px; height: 46px; margin-top: 14px; padding: 0 15px; border-right: 2px solid #555; display: flex; align-items: center; justify-content: center; }
.pin svg { margin-bottom: 14px; overflow: visible; letter-spacing: 0; }
.pin:first-child { width: 72px; padding: 0 15px 0 24px; }
.pin.dim { color: #a0a0a0; }
.pin.last { width: 60px; border: 0; }
.dvc { font: bold 20px "Liberation Sans", sans-serif; }
.tds { font: bold 17px "Noto Sans", sans-serif; }
.tab { height: 60px; display: flex; align-items: center; color: #b4b4b4; }
.tab .label { margin-top: -2px; line-height: 44px; }
.tab.active { width: 480px; padding: 0 16px; background: #2d2d2d; border-radius: 8px 8px 0 0; color: #fff; font-weight: 500; letter-spacing: .3px; }
.tab.active .label { margin-left: 16px; width: 384px; }
.air { width: 477px; padding-left: 14px; }
.gm { width: 478px; padding-left: 16px; letter-spacing: .4px; }
.gh { width: 478px; padding-left: 15px; letter-spacing: .1px; }
.gh svg { color: #fff; }
.so { width: 479px; padding-left: 20px; letter-spacing: .4px; }
.air .label, .gm .label, .gh .label, .so .label { margin-left: 17px; }
.gm .label, .gh .label, .so .label { width: 408px; }
.so .label { margin-left: 19px; }
.air, .gm, .gh, .so { background: linear-gradient(#555, #555) right bottom / 2px 46px no-repeat; }
.fade { -webkit-mask-image: linear-gradient(90deg, #000 84%, rgba(0, 0, 0, .12) 100%); mask-image: linear-gradient(90deg, #000 84%, rgba(0, 0, 0, .12) 100%); }
.plus { margin: 18px 0 0 31px; }
.winctl { margin: 18px 25px 0 auto; display: grid; grid-template-columns: 71px 64px 66px 22px; align-items: center; color: #fff; }

/* browser toolbar */
.toolbar { height: 78px; flex: none; display: flex; align-items: center; padding-bottom: 2px; background: #2d2d2d; }
.nav { display: grid; grid-template-columns: 64px 60px 64px 28px; margin-left: 34px; }
.bookmark { margin-left: 453px; }
.url { width: 2160px; height: 60px; margin-left: 33px; border-radius: 8px; background: #3d3d3d; display: flex; align-items: center; padding-left: 27px; font-size: 27.500px; }
.addr { width: 1949px; margin: -2px 0 0 23px; display: flex; color: #b0b0b0; }
.addr b { font-weight: 400; color: #fff; }
.vsep { width: 2px; height: 32px; margin-right: 22px; background: #b0b0b0; }
.shield { display: flex; position: relative; }
.shield em { position: absolute; left: 25px; top: -2px; width: 24px; height: 24px; border-radius: 12px; background: #5f6373; font: 18px/24px "Noto Sans", sans-serif; text-align: center; }
.bat { margin-left: 36px; }
.exts { margin-left: 278px; display: flex; gap: 32.200px; }
.exts svg { width: 32px; height: 32px; }

/* project header */
.apphead { height: 144px; flex: none; display: flex; align-items: center; background: #13111c linear-gradient(#211f2d, #211f2d) bottom / 100% 2px no-repeat; font-family: Inter, sans-serif; }
.brand, .env { height: 142px; margin-bottom: 2px; padding-top: 2px; display: flex; align-items: center; border-right: 2px solid #211f2d; }
.brand { width: 568px; padding-left: 64px; font-size: 35.900px; font-weight: 600; }
.brand span { margin-left: 32px; }
.env { width: 381px; padding-left: 49px; font-size: 32px; font-weight: 500; }
.env span { width: 186px; margin-left: 33px; }
.links { margin-left: 1744px; display: grid; grid-template-columns: 132px 127px 212px; font-size: 28px; font-weight: 500; color: #868391; }
.plan { width: 480px; height: 68px; border-radius: 12px; background: #181e1d; color: #41946a; font-size: 28px; display: grid; grid-template-columns: 183px 112px 135px; align-items: center; padding-left: 24px; }
.plan .p1 { font-weight: 500; }
.plan .p3 { border-left: 2px solid #1d3329; padding-left: 28px; height: 34px; line-height: 34px; }
.avatar { width: 48px; height: 48px; margin-left: 32px; border-radius: 50%; background: linear-gradient(135deg, #b4104a 8%, #67523a 45%, #10a828 88%); }
.achev { margin-left: 23px; }

/* canvas with dotted grid */
.canvas {
  height: 1694px; flex: none; position: relative; display: flex; justify-content: flex-end; align-items: flex-start; padding-top: 32px;
  background: linear-gradient(#1f1d29, #1f1d29) bottom / 100% 2px no-repeat, linear-gradient(#13111c, #13111c) top / 100% 10px no-repeat, radial-gradient(circle, #33313e 1.500px, transparent 2.400px) -22px 26px / 48px 48px, #13111c;
  font-family: Inter, sans-serif;
}
.node { position: absolute; left: 434px; top: 674px; width: 576px; height: 288px; border: 2px solid #7430b0; border-radius: 24px; background: #181622; padding: 49px 49px 45px 48px; display: flex; flex-direction: column; justify-content: space-between; }
.node-head { display: flex; align-items: center; gap: 26px; font-size: 32.200px; font-weight: 600; }
.node-foot { font-size: 28px; color: #9a97a5; line-height: 48px; }
.panel { width: 2400px; height: 1660px; border: 2px solid #33323e; border-radius: 24px 0 0 0; background: #181622; padding: 95px 96px 0; display: flex; flex-direction: column; }
.title { height: 77px; display: flex; align-items: center; }
.title h1 { margin: 0 auto 0 36px; font-size: 56.200px; font-weight: 600; }
.title .close { margin: 2px 25px 0 0; }
.tabs { height: 104px; margin-top: 39px; border-bottom: 2px solid #33323e; display: flex; gap: 64px; font-size: 32px; line-height: 103px; color: #868391; }
.tabs .on { color: #fff; border-bottom: 2px solid #fff; height: 102px; }
.subhead { margin-top: 70px; display: grid; grid-template-columns: 1fr auto 1fr; height: 44px; }
.subhead h2 { grid-column: 2; margin: 0; font-size: 32px; line-height: 36px; font-weight: 400; }
.subhead svg { justify-self: end; margin: 12px 18px 0 0; }
.tables { margin-top: 86px; display: grid; grid-template-columns: repeat(7, 302px); column-gap: 15px; font-size: 32px; }
.tables div { display: flex; flex-direction: column; align-items: center; gap: 28px; line-height: 40px; }
.create { align-self: flex-end; width: 238px; height: 84px; margin-top: 84px; padding: 0; border: 0; border-radius: 10px; background: #853bce; color: #fff; font: 400 32px Inter, sans-serif; }

/* dock */
.dockwrap { flex: 1; position: relative; padding-top: 12px; background: #000 linear-gradient(#1f1d29, #1f1d29) bottom / 100% 2px no-repeat; }
.wall { position: absolute; left: 0; top: 0; }
.dock { height: 108px; position: relative; display: flex; align-items: center; padding: 0 14px 0 46px; gap: 40px; background: rgba(84, 84, 84, .5); }
.tile { width: 92px; height: 92px; position: relative; display: flex; align-items: center; justify-content: center; background: rgba(30, 30, 30, .35); box-shadow: 0 0 4px rgba(30, 30, 30, .35); }
.tile svg { width: 54px; height: 54px; overflow: visible; }
.tile .big { width: 62px; height: 62px; }
.cur { background: #4d4d4d; border-radius: 4px; }
.dots { position: absolute; left: 0; right: 0; bottom: 0; display: flex; justify-content: center; gap: 4px; }
.dots i { width: 8.500px; height: 8.500px; border-radius: 50%; background: #7a629b; }
.dsep { width: 2px; height: 32px; margin: 0 -12px 0 -12px; background: #5c5c5c; }
.apps { margin-left: auto; }
.pc { font: bold 25px "Open Sans", sans-serif; letter-spacing: -1px; }
.ce { font: bold 11px "Open Sans", sans-serif; }
```
